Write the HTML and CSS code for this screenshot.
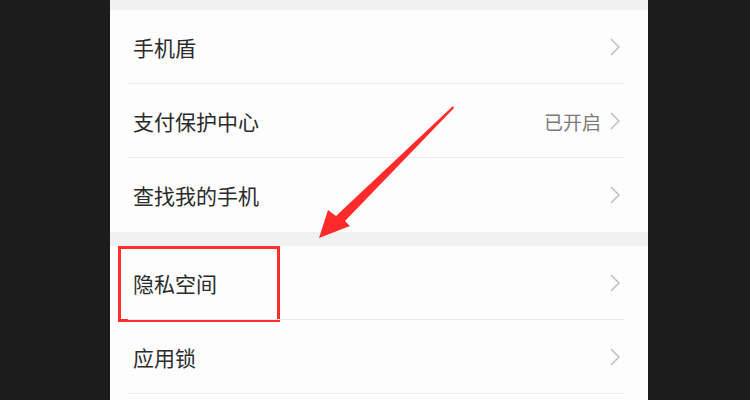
FILE: index.html
```html
<!DOCTYPE html>
<html lang="zh-CN">
<head>
    <meta charset="UTF-8">
    <meta name="viewport" content="width=device-width, initial-scale=1.0">
    <title>安全</title>
    <link rel="stylesheet" href="styles.css">
</head>
<body>
    <div class="screen">
        <div class="gap top-gap"></div>
        <ul class="group">
            <li class="row">
                <span class="label">手机盾</span>
                <svg class="chevron" width="10" height="18" viewBox="0 0 10 18"><polyline points="1,1 9,9 1,17"/></svg>
            </li>
            <li class="row">
                <span class="label">支付保护中心</span>
                <span class="status">已开启</span>
                <svg class="chevron" width="10" height="18" viewBox="0 0 10 18"><polyline points="1,1 9,9 1,17"/></svg>
            </li>
            <li class="row last">
                <span class="label">查找我的手机</span>
                <svg class="chevron" width="10" height="18" viewBox="0 0 10 18"><polyline points="1,1 9,9 1,17"/></svg>
            </li>
        </ul>
        <div class="gap"></div>
        <ul class="group">
            <li class="row">
                <span class="label">隐私空间</span>
                <svg class="chevron" width="10" height="18" viewBox="0 0 10 18"><polyline points="1,1 9,9 1,17"/></svg>
                <div class="highlight"></div>
            </li>
            <li class="row">
                <span class="label">应用锁</span>
                <svg class="chevron" width="10" height="18" viewBox="0 0 10 18"><polyline points="1,1 9,9 1,17"/></svg>
            </li>
        </ul>

        <!-- 标注箭头 -->
        <svg class="arrow" width="538" height="400" viewBox="0 0 538 400">
            <polygon fill="#ff2b2b" points="343,106 344,108 235,221 240,226 209,238 218,210 226,216"/>
        </svg>
    </div>
</body>
</html>
```

FILE: styles.css
```css
/* 기본 */
body {
    margin: 0;
    padding: 0;
    background: #1c1c1c;
    font-family: "Noto Sans CJK SC", "Noto Sans", sans-serif;
    overflow: hidden;
}

.screen {
    position: relative;
    width: 538px;
    height: 400px;
    margin-left: 110px;
    background: #fdfdfd;
    overflow: hidden;
}

ul {
    list-style: none;
    margin: 0;
    padding: 0;
}

.gap {
    height: 14px;
    background: #f1f1f1;
}

.top-gap {
    height: 10px;
}

.group {
    background: #fdfdfd;
}

.row {
    position: relative;
    display: flex;
    align-items: center;
    height: 74px;
    padding: 0 28px 0 23px;
}

.row::after {
    content: "";
    position: absolute;
    left: 18px;
    right: 23px;
    bottom: 0;
    height: 1px;
    background: #ececec;
}

.row.last::after {
    display: none;
}

.label {
    flex: 1;
    font-size: 21px;
    color: #2b2b2b;
}

.status {
    font-size: 19px;
    color: #7a7a7a;
    margin-right: 9px;
}

/* 오른쪽 화살표 */
.chevron {
    fill: none;
    stroke: #bdbdbd;
    stroke-width: 1.5;
}

.highlight {
    position: absolute;
    left: 8px;
    top: 0;
    width: 156px;
    height: 70px;
    border: 3px solid #ff2d2d;
}

.arrow {
    position: absolute;
    left: 0;
    top: 0;
    pointer-events: none;
}
```
